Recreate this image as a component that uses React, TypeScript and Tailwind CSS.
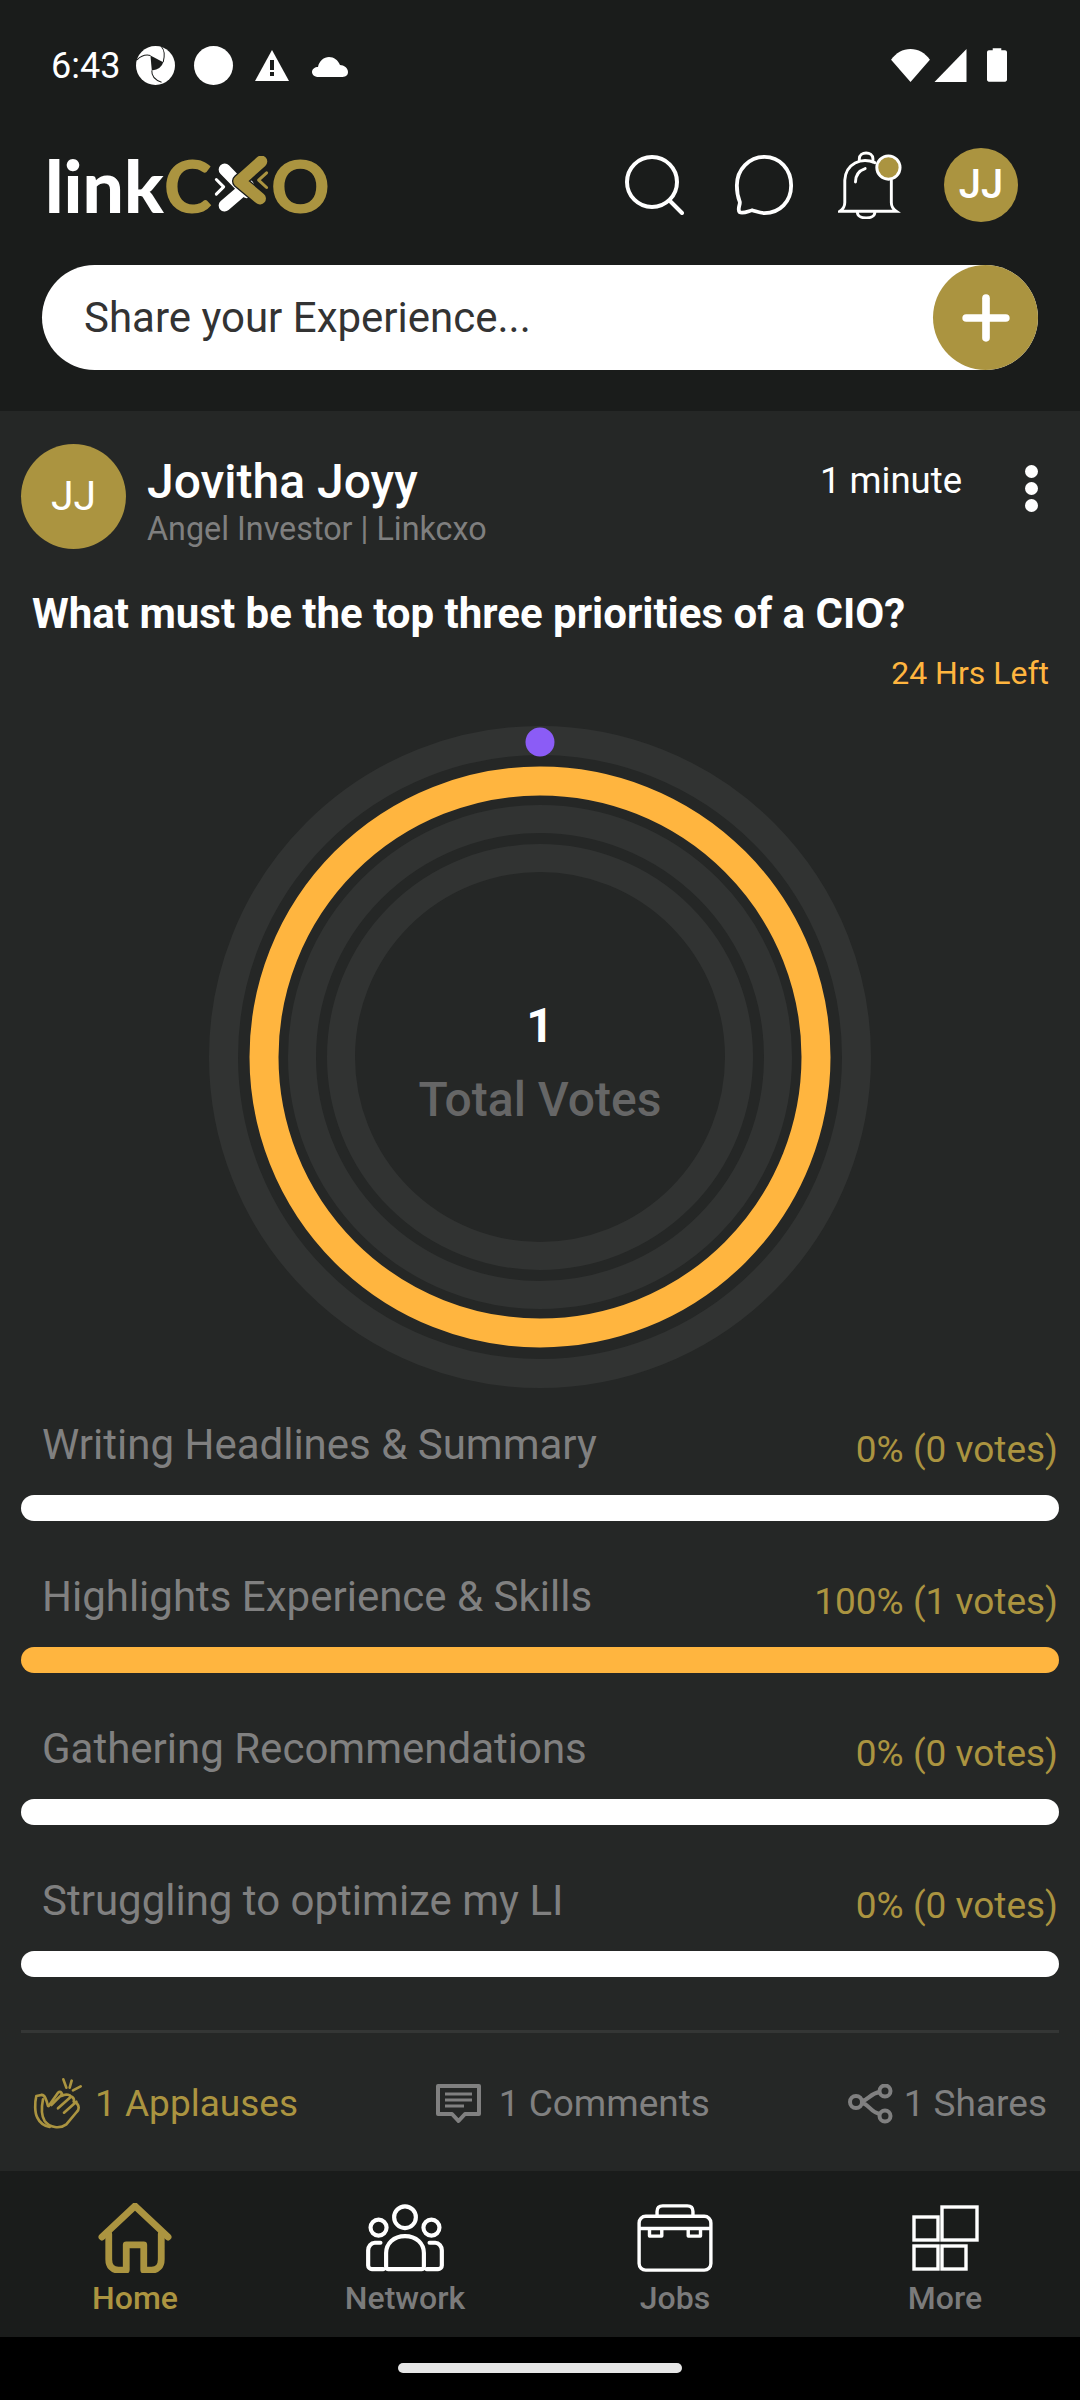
import { Plus } from 'lucide-react';

const ClapIcon = () => (
  <svg width="50" height="55" viewBox="25 15 150 165" fill="none" stroke="#ab9440" strokeWidth="8" strokeLinecap="round" strokeLinejoin="round">
    <path d="M116 25l9 25M141 29l-6 21M168 46l-23 12" />
    <path d="M50 72l-15 3c-5 20-5 50 3 65 7 15 22 25 37 28" />
    <path d="M50 72c10-2 15 13 20 33" />
    <path d="M72 105l28-40c8-7 15 3 10 10l8-3c8-3 18 0 20 4 8 2 12 10 9 16 8 2 14 10 15 18 0 6-3 10-6 13l-31 37c-20 15-50 10-65-10-10-15-10-40-5-65" />
    <path d="M80 102l32-32M100 112l38-34M118 125l37-33" />
  </svg>
);

const CommentIcon = () => (
  <svg width="45" height="40" viewBox="0 0 45 40" fill="none" stroke="#808080">
    <path d="M2 2h41v28H29l-6.5 7-6.5-7H2z" strokeWidth="4" strokeLinejoin="round" />
    <path d="M9 10h27M9 16h27M9 22h19" strokeWidth="3.2" />
  </svg>
);

const ShareIcon = () => (
  <svg width="46" height="40" viewBox="0 0 46 40" fill="none" stroke="#808080" strokeWidth="4">
    <circle cx="8" cy="18" r="6" />
    <circle cx="37" cy="7" r="5.5" />
    <circle cx="37" cy="32" r="5.5" />
    <path d="M14 17c7-1 8-8 18-9M14 19c7 1 8 9 18 11" />
  </svg>
);

const StatusBar = () => (
  <div className="flex h-[130px] items-center pl-[51px] pr-[73px]">
    <span className="mt-[2px] text-[36px] leading-none text-white">6:43</span>
    <div className="ml-[16px] flex items-center">
      {/* shutter style app icon */}
      <svg width="39" height="39" viewBox="19 27 116 116">
        <circle cx="77" cy="85" r="58" fill="#fff" />
        <path d="M62 55L100 75Q95 95 66 100Z" fill="#1a1c1b" />
        <path d="M22 68C35 55 50 52 62 55M100 75C105 55 105 40 95 30M66 100C65 115 75 128 95 135" fill="none" stroke="#1a1c1b" strokeWidth="3" />
      </svg>
      <div className="ml-[19px] h-[39px] w-[39px] rounded-full bg-white" />
      <svg className="ml-[22px]" width="34" height="31" viewBox="0 0 34 31">
        <path d="M17 0l17 31H0z" fill="#fff" />
        <rect x="15" y="10" width="4" height="10" fill="#1a1c1b" />
        <rect x="15" y="22" width="4" height="4" fill="#1a1c1b" />
      </svg>
      <svg className="ml-[23px] mt-[4px]" width="36" height="20" viewBox="0 0 36 20">
        <path d="M7 20C3 20 0 18 0 15s3-5 6-5c1-6 6-10 11-10s9 3 11 8c4 0 8 3 8 7s-3 5-7 5z" fill="#fff" />
      </svg>
    </div>
    <div className="ml-auto flex items-center">
      <svg width="39" height="33" viewBox="0 0 40 34">
        <path d="M0 11C5 4 12 0 20 0s15 4 20 11L20 34z" fill="#fff" />
      </svg>
      <svg className="ml-[4px]" width="33" height="33" viewBox="0 0 33 34">
        <path d="M33 0v34H0z" fill="#fff" />
      </svg>
      <svg className="ml-[20px]" width="20" height="34" viewBox="0 0 21 35">
        <path d="M6 0h9v2h4c1 0 2 1 2 2v29c0 1-1 2-2 2H2c-1 0-2-1-2-2V4c0-1 1-2 2-2h4z" fill="#fff" />
      </svg>
    </div>
  </div>
);

const LogoMark = () => (
  <svg className="mx-[2px]" width="55" height="57" viewBox="530 20 165 170" fill="none" strokeLinecap="round" strokeLinejoin="round">
    <path d="M562 60L628 128" stroke="#fff" strokeWidth="36" />
    <path d="M632 108L562 168" stroke="#fff" strokeWidth="36" />
    <path d="M537 90l22 22-22 22" stroke="#fff" strokeWidth="9" />
    <path d="M672 36L606 95l62 52" stroke="#1a1c1b" strokeWidth="44" />
    <path d="M672 36L606 95l62 52" stroke="#ab9440" strokeWidth="36" />
    <path d="M688 70l-24 22 24 22" stroke="#ab9440" strokeWidth="9" />
  </svg>
);

const Logo = () => (
  <div className="flex w-[285px] items-baseline font-['Lato',sans-serif] text-[73px] font-black leading-[70px]">
    <span className="text-white">link</span>
    <span className="text-[#ab9440]">C</span>
    <LogoMark />
    <span className="text-[#ab9440]">O</span>
  </div>
);

const Header = () => (
  <div className="flex h-[110px] items-center pl-[45px]">
    <Logo />
    <svg className="ml-[295px]" width="59" height="60" viewBox="0 0 59 60" fill="none" stroke="#fff" strokeWidth="4" strokeLinecap="round">
      <circle cx="27" cy="27" r="25" />
      <path d="M45 46l12 12" />
    </svg>
    <svg className="ml-[50px]" width="60" height="60" viewBox="0 0 61 63" fill="none" stroke="#fff" strokeWidth="4" strokeLinejoin="round">
      <path d="M31 2c16 0 28 13 28 30S47 61 31 61c-5 0-9-2-13-3-4 1-10 4-13 2-3-3 1-8 0-11C3 44 2 38 2 32 2 15 15 2 31 2z" />
    </svg>
    <svg className="ml-[44px]" width="64" height="68" viewBox="0 0 66 70" fill="none" stroke="#fff" strokeWidth="3" strokeLinecap="round">
      <path d="M22 10V8c0-8 14-8 14 0v3" />
      <path d="M38 12C24 6 8 13 7 30v23c0 4-2 7-5 9h58c-3-2-5-5-5-9V30" />
      <path d="M18 32c0-7 4-12 10-14" />
      <path d="M20 63c0 8 18 8 18 0" />
      <circle cx="52" cy="17" r="12" fill="#ab9440" strokeWidth="3" />
    </svg>
    <div className="ml-[42px] flex h-[74px] w-[74px] items-center justify-center rounded-full bg-[#ab9440] text-[40px] font-medium text-white">JJ</div>
  </div>
);

const ShareBox = () => (
  <div className="mx-[42px] mt-[25px] flex h-[105px] items-center rounded-full bg-white pl-[42px]">
    <span className="text-[42px] text-[#333333]">Share your Experience...</span>
    <div className="ml-auto flex h-[105px] w-[105px] items-center justify-center rounded-full bg-[#ab9440]">
      <Plus size={68} color="#fff" strokeWidth={2.7} />
    </div>
  </div>
);

const Donut = () => (
  <div className="relative mx-auto mt-[33px] h-[662px] w-[662px]">
    <svg width="662" height="662" viewBox="0 0 662 662" fill="none">
      <circle cx="331" cy="331" r="316.5" stroke="#313332" strokeWidth="29" />
      <circle cx="331" cy="331" r="276" stroke="#ffb53f" strokeWidth="29" />
      <circle cx="331" cy="331" r="238" stroke="#313332" strokeWidth="28" />
      <circle cx="331" cy="331" r="199" stroke="#313332" strokeWidth="28" />
      <circle cx="331" cy="16" r="14.5" fill="#8b5cf6" />
    </svg>
    <div className="absolute inset-0 flex flex-col items-center justify-center">
      <span className="mb-[26px] text-[48px] font-bold leading-none text-white">1</span>
      <span className="mb-[-11px] text-[48px] font-medium leading-none text-[#666666]">Total Votes</span>
    </div>
  </div>
);

const options = [
  { label: 'Writing Headlines & Summary', value: '0% (0 votes)', active: false },
  { label: 'Highlights Experience & Skills', value: '100% (1 votes)', active: true },
  { label: 'Gathering Recommendations', value: '0% (0 votes)', active: false },
  { label: 'Struggling to optimize my LI', value: '0% (0 votes)', active: false },
];

const Option = ({ label, value, active }: { label: string; value: string; active: boolean }) => (
  <div className="h-[152px]">
    <div className="flex h-[77px] items-start justify-between pl-[21px] pr-[1px]">
      <span className="mt-[3px] text-[42px] leading-[48px] text-[#808080]">{label}</span>
      <span className="mt-[9px] text-[37px] leading-[46px] text-[#ab9440]">{value}</span>
    </div>
    <div className={`h-[26px] rounded-full ${active ? 'bg-[#ffb53f]' : 'bg-white'}`} />
  </div>
);

const PostCard = () => (
  <div className="flex-1 bg-[#252726] px-[21px] pt-[33px]">
    <div className="flex">
      <div className="flex h-[105px] w-[105px] shrink-0 items-center justify-center rounded-full bg-[#ab9440] text-[41px] text-white">JJ</div>
      <div className="ml-[21px] mt-[10px]">
        <div className="text-[48px] font-medium leading-[56px] text-white">Jovitha Joyy</div>
        <div className="mt-[1px] text-[32.3px] leading-[36px] text-[#7f7f7f]">Angel Investor | Linkcxo</div>
      </div>
      <span className="ml-auto mt-[17px] text-[36.5px] leading-[40px] text-white">1 minute</span>
      <div className="ml-[63px] mr-[21px] mt-[21px] flex flex-col gap-[4px]">
        <div className="h-[13px] w-[13px] rounded-full bg-white" />
        <div className="h-[13px] w-[13px] rounded-full bg-white" />
        <div className="h-[13px] w-[13px] rounded-full bg-white" />
      </div>
    </div>
    <div className="ml-[11px] mt-[41px] text-[42px] font-bold leading-[48px] text-white">What must be the top three priorities of a CIO?</div>
    <div className="mr-[10px] mt-[15px] text-right text-[32px] leading-[40px] text-[#ffb53f]">24 Hrs Left</div>
    <Donut />
    <div className="mt-[30px]">
      {options.map((o) => (
        <Option key={o.label} {...o} />
      ))}
    </div>
    <div className="mt-[4px] h-[3px] bg-[#343635]" />
    <div className="mt-[43px] flex items-center justify-between pl-[12px] pr-[12px] text-[37px] leading-[55px]">
      <div className="flex items-center gap-[12px] text-[#ab9440]">
        <ClapIcon />
        <span>1 Applauses</span>
      </div>
      <div className="flex items-center gap-[18px] text-[#808080]">
        <CommentIcon />
        <span>1 Comments</span>
      </div>
      <div className="flex items-center gap-[10px] text-[#808080]">
        <ShareIcon />
        <span>1 Shares</span>
      </div>
    </div>
  </div>
);

const HomeIcon = () => (
  <svg width="74" height="70" viewBox="0 0 74 72" fill="none" stroke="#ab9440" strokeWidth="7" strokeLinecap="round" strokeLinejoin="round">
    <path d="M3 35L37 3l34 32" />
    <path d="M10 32v26c0 7 4 11 10 11h8V43h18v26h8c6 0 10-4 10-11V32" />
  </svg>
);

const NetworkIcon = () => (
  <svg width="82" height="68" viewBox="0 0 82 72" fill="none" stroke="#fff" strokeWidth="4.4" strokeLinecap="round" strokeLinejoin="round">
    <circle cx="41" cy="14" r="11.5" />
    <circle cx="13" cy="25" r="8.5" />
    <circle cx="69" cy="25" r="8.5" />
    <path d="M23 69c-1 0-2-1-2-3V52c0-10 8-18 20-18s20 8 20 18v14c0 2-1 3-2 3z" />
    <path d="M15 41H9c-4 0-7 4-7 8v16c0 2 2 4 4 4h12M67 41h6c4 0 7 4 7 8v16c0 2-2 4-4 4H64" />
  </svg>
);

const JobsIcon = () => (
  <svg width="80" height="68" viewBox="0 0 80 72" fill="none" stroke="#fff" strokeWidth="3.6" strokeLinejoin="round">
    <rect x="2" y="13" width="76" height="57" rx="7" />
    <path d="M2 26h76" />
    <path d="M21 13V8c0-4 2-6 6-6h26c4 0 6 2 6 6v5" />
    <path d="M13 26v8h13v-8M54 26v8h13v-8" />
  </svg>
);

const MoreIcon = () => (
  <svg width="67" height="66" viewBox="0 0 67 66" fill="none" stroke="#fff" strokeWidth="3.4">
    <rect x="2" y="12" width="24" height="23" />
    <rect x="30" y="2" width="35" height="33" />
    <rect x="2" y="41" width="24" height="23" />
    <rect x="30" y="41" width="24" height="23" />
  </svg>
);

const tabs = [
  { label: 'Home', icon: <HomeIcon />, active: true },
  { label: 'Network', icon: <NetworkIcon />, active: false },
  { label: 'Jobs', icon: <JobsIcon />, active: false },
  { label: 'More', icon: <MoreIcon />, active: false },
];

const BottomNav = () => (
  <div className="grid h-[166px] grid-cols-4 bg-[#1a1c1b] pt-[32px]">
    {tabs.map((t) => (
      <div key={t.label} className="flex flex-col items-center">
        <div className="flex h-[69px] items-center">{t.icon}</div>
        <span className={`mt-[6px] text-[32px] font-medium leading-[40px] ${t.active ? 'text-[#ab9440]' : 'text-[#7b7b7b]'}`}>{t.label}</span>
      </div>
    ))}
  </div>
);

export default function App() {
  return (
    <div className="flex h-[2400px] w-[1080px] flex-col overflow-hidden bg-black font-['Roboto',sans-serif]">
      <div className="h-[411px] bg-[#1a1c1b]">
        <StatusBar />
        <Header />
        <ShareBox />
      </div>
      <PostCard />
      <BottomNav />
      <div className="flex h-[63px] items-start justify-center pt-[26px]">
        <div className="h-[10px] w-[284px] rounded-full bg-[#e6e6e6]" />
      </div>
    </div>
  );
}
